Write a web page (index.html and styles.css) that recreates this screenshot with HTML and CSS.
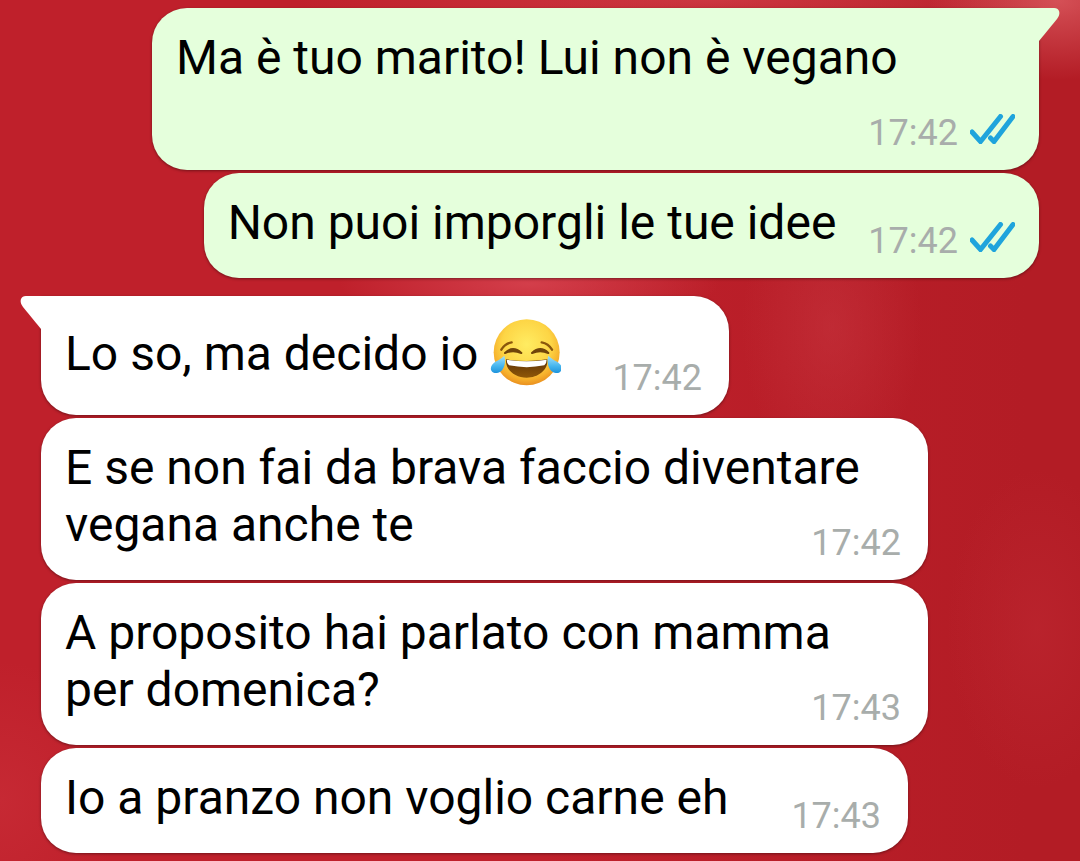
FILE: index.html
```html
<!DOCTYPE html>
<html lang="it">

<head>
  <meta charset="UTF-8">
  <meta name="viewport" content="width=device-width, initial-scale=1.0">
  <title>Chat</title>
  <link rel="stylesheet" href="styles.css">
</head>

<body>
  <main class="chat">
    <div class="msg out tail">
      <span class="text">Ma è tuo marito! Lui non è vegano</span>
      <span class="meta">
        <time>17:42</time>
        <svg class="ticks" viewBox="0 0 45 30"><path d="M2 18L10.500 27.500L30.500 2.500M20.500 24L24 27.500L43 2.500" /></svg>
      </span>
    </div>
    <div class="msg out">
      <span class="text">Non puoi imporgli le tue idee</span>
      <span class="meta">
        <time>17:42</time>
        <svg class="ticks" viewBox="0 0 45 30"><path d="M2 18L10.500 27.500L30.500 2.500M20.500 24L24 27.500L43 2.500" /></svg>
      </span>
    </div>
    <div class="msg in tail with-emoji">
      <span class="text">Lo so, ma decido io
        <svg class="emoji" viewBox="27 21 213 213" role="img" aria-label="risata con lacrime">
          <defs>
            <radialGradient id="face" cx="50%" cy="38%" r="62%">
              <stop offset="0" stop-color="#ffec62" />
              <stop offset=".6" stop-color="#fdd545" />
              <stop offset=".85" stop-color="#f6b02c" />
              <stop offset="1" stop-color="#ea9020" />
            </radialGradient>
            <linearGradient id="mouth" x1="0" y1="0" x2="0" y2="1">
              <stop offset="0" stop-color="#5c3206" />
              <stop offset="1" stop-color="#8f5708" />
            </linearGradient>
            <linearGradient id="tear" x1="0" y1="0" x2="0" y2="1">
              <stop offset="0" stop-color="#a5e2fa" />
              <stop offset=".6" stop-color="#45b5ee" />
              <stop offset="1" stop-color="#1d93dc" />
            </linearGradient>
          </defs>
          <circle cx="137" cy="127" r="99" fill="url(#face)" />
          <path d="M61 119Q72 100 92 97M213 119Q202 100 182 97" fill="none" stroke="#8a570c" stroke-width="7" stroke-linecap="round" />
          <path d="M72 129Q96 106 121 129Q96 119 72 129ZM202 129Q178 106 153 129Q178 119 202 129Z" fill="#70450a" stroke="#70450a" stroke-width="6" stroke-linejoin="round" />
          <path d="M75 148Q137 158 199 148C202 179 173 203 137 203C101 203 72 179 75 148Z" fill="url(#mouth)" />
          <path d="M77 149Q137 159 197 149Q197 160 190 166Q137 177 84 166Q77 160 77 149Z" fill="#fff" />
          <path d="M70 137C76 155 70 187 48 189C31 191 25 176 33 165C41 153 57 151 70 137Z" fill="url(#tear)" />
          <path d="M202 137C196 155 202 187 224 189C241 191 245 176 239 165C231 153 215 151 202 137Z" fill="url(#tear)" />
        </svg></span>
      <span class="meta"><time>17:42</time></span>
    </div>
    <div class="msg in">
      <span class="text">E se non fai da brava faccio diventare vegana anche te</span>
      <span class="meta"><time>17:42</time></span>
    </div>
    <div class="msg in">
      <span class="text">A proposito hai parlato con mamma per domenica?</span>
      <span class="meta"><time>17:43</time></span>
    </div>
    <div class="msg in">
      <span class="text">Io a pranzo non voglio carne eh</span>
      <span class="meta"><time>17:43</time></span>
    </div>
  </main>
</body>

</html>
```
FILE: styles.css
```css
* {
  margin: 0;
  padding: 0;
  box-sizing: border-box;
}

body {
  min-height: 100vh;
  font-family: Roboto, sans-serif;
  color: #000;
  background:
    radial-gradient(ellipse 130px 80px at 98% 0, rgba(225, 100, 105, .7), transparent),
    radial-gradient(ellipse 420px 30px at 66% 0, rgba(215, 70, 80, .6), transparent),
    radial-gradient(ellipse 190px 40px at 49% 33%, rgba(220, 75, 88, .7), transparent),
    radial-gradient(ellipse 90px 150px at 77% 38%, rgba(200, 55, 65, .5), transparent),
    radial-gradient(ellipse 90px 160px at 96% 73%, rgba(195, 45, 55, .4), transparent),
    radial-gradient(ellipse 120px 140px at 0 93%, rgba(205, 50, 60, .5), transparent),
    linear-gradient(90deg, #bf202b 0, #bf202b 50%, #b31c25 95%);
}

.chat {
  display: flex;
  flex-direction: column;
  gap: 3px;
  padding: 8px 41px;
}

.msg {
  display: flow-root;
  position: relative;
  max-width: calc(100% - 111px);
  padding: 21px 24px 27px;
  border-radius: 35px;
  font-size: 48px;
  line-height: 57px;
  box-shadow: 0 1px 3px rgba(0, 0, 0, .4);
}

.out {
  align-self: flex-end;
  background: #e5ffdc;
}

.in {
  align-self: flex-start;
  padding-right: 27px;
  background: #fff;
}

.out + .in {
  margin-top: 15px;
}

.out.tail {
  border-top-right-radius: 0;
}

.in.tail {
  border-top-left-radius: 0;
}

.tail::before {
  content: "";
  position: absolute;
  top: 0;
  width: 22px;
  height: 33px;
  background: inherit;
}

.in.tail::before {
  right: calc(100% - 1px);
  clip-path: path("M22 0H6C0 0 -1 6 3 11L21 33H22Z");
}

.out.tail::before {
  left: calc(100% - 1px);
  clip-path: path("M0 0H16C22 0 23 6 19 11L1 33H0Z");
}

/* the time hangs a little below the last line of text */
.meta {
  float: right;
  display: flex;
  align-items: center;
  gap: 12px;
  margin: 26px 0 -11px 32px;
  font-size: 36px;
  line-height: 42px;
  color: #a8adab;
}

.in .meta {
  margin-left: 63px;
}

.with-emoji .meta {
  margin-top: 40px;
}

.ticks {
  width: 45px;
  height: 30px;
  margin-bottom: 8px;
  fill: none;
  stroke: #1fa4dc;
  stroke-width: 5;
  stroke-linecap: round;
}

.emoji {
  width: 71px;
  height: 71px;
  margin-right: -12px;
  vertical-align: -18px;
}
```
